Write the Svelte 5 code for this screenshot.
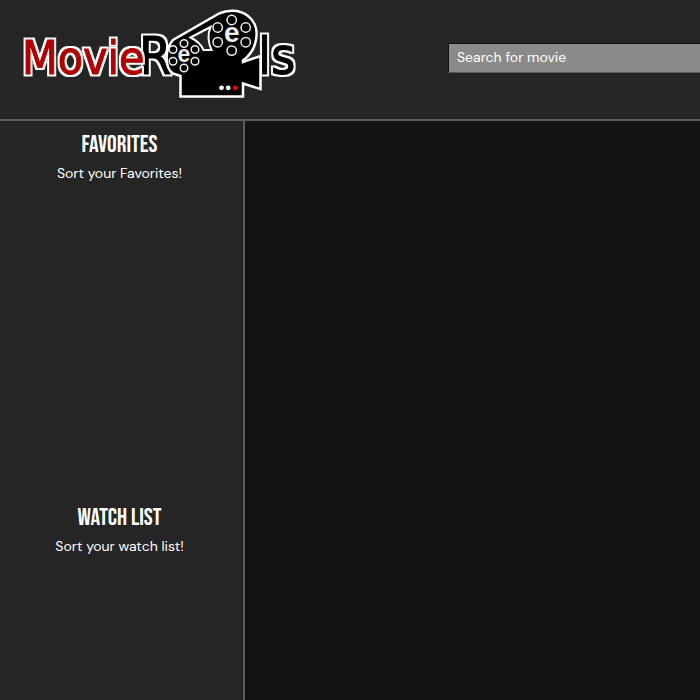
<script>
  const lists = [
    { id: 'favorites', title: 'FAVORITES', hint: 'Sort your Favorites!' },
    { id: 'watch-list', title: 'WATCH LIST', hint: 'Sort your watch list!' }
  ];
  const reels = [
    { x: 231.7, y: 35, rx: 14, ry: 15, hole: 4.7, size: 28, drop: 7 },
    { x: 184, y: 55.5, rx: 11, ry: 12, hole: 3.8, size: 23, drop: 6 }
  ];
  const holes = [[0, -1], [1, -0.5], [1, 0.48], [0, 1.04], [-1, 0.48], [-1, -0.5]];
</script>

<div class="app">
  <header>
    <a class="logo" href="#home" aria-label="MovieReels home">
      <svg width="310" height="110" viewBox="0 0 310 110">
        <filter id="outline" x="-10%" y="-10%" width="120%" height="120%" color-interpolation-filters="sRGB">
          <feMorphology in="SourceAlpha" operator="dilate" radius="2" result="spread" />
          <feFlood flood-color="#fff" />
          <feComposite in2="spread" operator="in" />
          <feMerge>
            <feMergeNode />
            <feMergeNode in="SourceGraphic" />
          </feMerge>
        </filter>
        <g class="word">
          <text x="139" y="74">R</text>
          <text class="red" x="22" y="74">Movie</text>
          <text x="258" y="74">ls</text>
        </g>
        <path
          class="camera"
          d="M180.500 96.500V76L173 73.500C167 69.500 166 61 167 53Q168 46 173 40L219 13.500C229 9 240 10 248 16C256 22 258 32 255.500 42C253.500 51 249 56 243 60.500V62L260.500 56V89L243 83.500V96.500Z"
        />
        <path class="gap" d="M190.500 37.500L210.500 27Q206 38 211.500 50H203.500Q200 42 190.500 37.500Z" />
        {#each reels as reel}
          {#each holes as [x, y]}
            <circle class="hole" cx={reel.x + x * reel.rx} cy={reel.y + y * reel.ry} r={reel.hole} />
          {/each}
          <text class="hub" x={reel.x} y={reel.y + reel.drop} font-size={reel.size}>e</text>
        {/each}
        <circle cx="221.500" cy="87.800" r="2.400" fill="#fff" />
        <circle cx="228.300" cy="87.800" r="2.400" fill="#fff" />
        <circle cx="235.200" cy="87.800" r="2.400" fill="#f00" />
      </svg>
    </a>
    <form role="search">
      <input type="search" aria-label="Search for movie" placeholder="Search for movie" />
    </form>
  </header>
  <div class="body">
    <aside>
      {#each lists as list}
        <section aria-labelledby={list.id}>
          <h2 id={list.id}>{list.title}</h2>
          <p>{list.hint}</p>
        </section>
      {/each}
    </aside>
    <main></main>
  </div>
</div>

<style>
  :global(body) {
    margin: 0;
    background: #121212;
  }
  .app {
    display: flex;
    flex-direction: column;
    min-height: 100vh;
    color: #fff;
    font-family: 'DM Sans', 'Open Sans', sans-serif;
    font-size: 14px;
  }
  header {
    display: flex;
    flex: none;
    align-items: flex-start;
    box-sizing: border-box;
    height: 121px;
    background: #252525;
    border-bottom: 2px solid #5b5b5b;
  }
  .logo {
    flex: none;
  }
  svg {
    display: block;
  }
  .word text {
    font: 52px 'DejaVu Sans Condensed', 'DejaVu Sans', sans-serif;
    font-stretch: condensed;
    fill: #000;
    stroke: #000;
    stroke-width: 1px;
    filter: url(#outline);
  }
  .word .red {
    font-size: 46px;
    fill: #b20000;
    stroke: #b20000;
  }
  .camera {
    fill: #000;
    stroke: #fff;
    stroke-width: 2.500px;
  }
  .gap {
    fill: #252525;
    stroke: #fff;
    stroke-width: 2px;
  }
  .hole {
    fill: #000;
    stroke: #eee;
    stroke-width: 1.500px;
  }
  .hub {
    fill: #eee;
    font-family: 'Liberation Sans', sans-serif;
    font-weight: 700;
    text-anchor: middle;
  }
  form {
    flex: 1;
    min-width: 0;
    margin: 43px 0 0 138px;
  }
  input {
    display: block;
    box-sizing: border-box;
    width: 100%;
    height: 30px;
    padding: 0 8px 2px;
    border: 1px solid;
    border-color: #121212 transparent #5b5b5b #121212;
    border-right: 0;
    border-radius: 0;
    background: #8a8a8a;
    color: #fff;
    font: inherit;
    appearance: none;
  }
  input::placeholder {
    color: #fff;
    opacity: 1;
  }
  .body {
    display: flex;
    flex: 1;
  }
  aside {
    flex: none;
    box-sizing: border-box;
    width: 245px;
    padding-right: 4px;
    background: #252525;
    border-right: 2px solid #5b5b5b;
    text-align: center;
  }
  section {
    padding-top: 10px;
  }
  section:not(:last-child) {
    min-height: 363px;
  }
  h2 {
    margin: 0;
    font: 400 24px/28px 'Bebas Neue', 'Liberation Sans Narrow', sans-serif;
  }
  p {
    margin: 4px 0 0;
    line-height: 20px;
  }
  main {
    flex: 1;
    background: #121212;
  }
</style>
